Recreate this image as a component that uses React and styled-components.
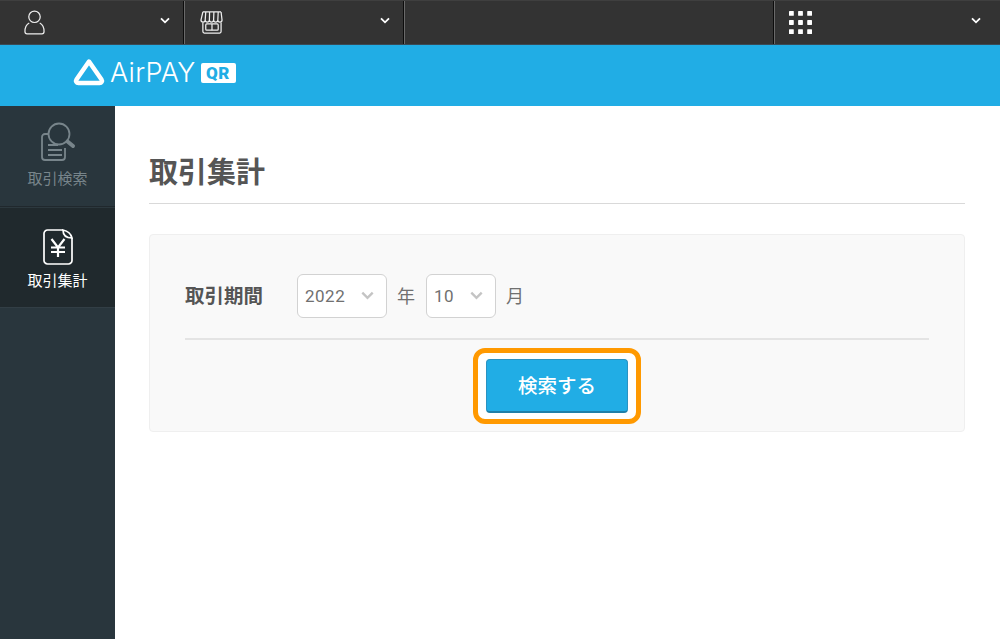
import React from 'react';
import styled, { createGlobalStyle } from 'styled-components';

const GlobalStyle = createGlobalStyle`
  html, body {
    margin: 0;
    padding: 0;
    background: #fff;
  }
  body {
    font-family: "Roboto", "Noto Sans CJK JP", sans-serif;
    color: #555;
  }
  * {
    box-sizing: border-box;
  }
`;

const Page = styled.div`
  width: 1000px;
  height: 639px;
  display: flex;
  flex-direction: column;
  overflow: hidden;
`;

const TopBar = styled.div`
  display: flex;
  height: 45px;
  flex: none;
  background: #333333;
  border-top: 1px solid #3f3f3f;
  border-bottom: 1px solid #3a4a55;
`;

const TopCell = styled.div`
  width: ${(props) => props.$width}px;
  flex: ${(props) => (props.$grow ? 1 : 'none')};
  display: flex;
  align-items: center;
  justify-content: space-between;
  padding: 0 ${(props) => props.$right}px 1px ${(props) => props.$left}px;
  border-right: ${(props) => (props.$last ? 'none' : '1px solid #0c0c0c')};
  box-shadow: ${(props) => (props.$last ? 'none' : '1px 0 0 #6a6a6a')};
`;

const TopChevron = styled.span`
  display: flex;
  margin-bottom: 3px;
`;

const Brand = styled.div`
  height: 61px;
  flex: none;
  display: flex;
  align-items: center;
  gap: 5px;
  padding: 0 0 6px 73px;
  background: #21ade5;
`;

const BrandName = styled.span`
  font-family: "Inter", "Liberation Sans", sans-serif;
  font-size: 27px;
  font-weight: 300;
  letter-spacing: 0.3px;
  line-height: 28px;
  color: #fff;
`;

const QrBadge = styled.span`
  width: 35px;
  height: 20px;
  border-radius: 2px;
  background: #fff;
  color: #21ade5;
  font-family: "Roboto", sans-serif;
  font-size: 17px;
  font-weight: 900;
  line-height: 20px;
  letter-spacing: 0.5px;
  text-align: center;
`;

const Body = styled.div`
  flex: 1;
  display: flex;
  min-height: 0;
`;

const Sidebar = styled.nav`
  width: 115px;
  flex: none;
  background: #29363d;
`;

const NavItem = styled.div`
  height: 101px;
  display: flex;
  flex-direction: column;
  align-items: center;
  padding-top: ${(props) => (props.$active ? 21 : 16)}px;
  gap: ${(props) => (props.$active ? 5 : 6)}px;
  background: ${(props) => (props.$active ? '#20292d' : '#29363d')};
  border-top: ${(props) => (props.$active ? '1px solid #2c383e' : 'none')};
  border-bottom: 1px solid ${(props) => (props.$active ? '#323e45' : '#20282d')};
  color: ${(props) => (props.$active ? '#fff' : '#78858b')};
  font-size: 15px;
  line-height: 20px;
  font-family: "Noto Sans CJK JP", sans-serif;
`;

const Main = styled.main`
  flex: 1;
  padding: 44px 35px 0 34px;
`;

const Title = styled.h1`
  margin: 0;
  height: 54px;
  font-family: "Noto Sans CJK JP", sans-serif;
  font-size: 29px;
  font-weight: 700;
  line-height: 40px;
  color: #555;
  border-bottom: 1px solid #d9d9d9;
`;

const Panel = styled.section`
  margin-top: 30px;
  height: 198px;
  padding: 0 35px;
  background: #f9f9f9;
  border: 1px solid #efefef;
  border-radius: 4px;
`;

const FilterRow = styled.div`
  height: 105px;
  display: flex;
  align-items: center;
  padding-top: 19px;
  border-bottom: 2px solid #e4e4e4;
  font-family: "Noto Sans CJK JP", sans-serif;
`;

const FieldLabel = styled.span`
  width: 112px;
  padding-bottom: 3px;
  font-size: 19.5px;
  font-weight: 700;
  color: #555;
`;

const SelectBox = styled.div`
  width: ${(props) => props.$width}px;
  height: 44px;
  display: flex;
  align-items: center;
  justify-content: space-between;
  padding: 0 12px 1px 7px;
  background: #fff;
  border: 1px solid #d2d2d2;
  border-radius: 6px;
  font-family: "Roboto", sans-serif;
  font-size: 17px;
  letter-spacing: 0.5px;
  color: #707070;
`;

const Unit = styled.span`
  width: ${(props) => props.$width}px;
  padding: 0 1px 2px 0;
  text-align: center;
  font-size: 18px;
  color: #707070;
`;

const ButtonRow = styled.div`
  display: flex;
  justify-content: center;
  padding-top: 8px;
`;

const Highlight = styled.div`
  padding: 6px 8px;
  background: #fff;
  border: 5px solid #ff9900;
  border-radius: 12px;
`;

const SearchButton = styled.button`
  display: block;
  width: 142px;
  height: 54px;
  padding: 0 0 3px;
  background: #21ade5;
  border: 1px solid #2a93c2;
  border-bottom: 2px solid #1f7fa8;
  border-radius: 4px;
  color: #fff;
  font-family: "Noto Sans CJK JP", sans-serif;
  font-size: 19.5px;
  font-weight: 500;
`;

const Chevron = ({ color = '#fff', size = 10 }) => (
  <svg width={size} height={size * 0.7} viewBox="0 0 10 7" fill="none">
    <path d="M1 1.3 5 5.3 9 1.3" stroke={color} strokeWidth="1.8" />
  </svg>
);

const UserIcon = () => (
  <svg width="21" height="25" viewBox="0 0 22 26" fill="none" stroke="#eee" strokeWidth="1.3">
    <circle cx="11" cy="7" r="6" />
    <path d="M5.5 13.5C2.5 15 1 18 1 22.5c0 1.5.7 2.5 2.2 2.5h15.6c1.5 0 2.2-1 2.2-2.5 0-4.500-1.500-7.500-4.500-9" />
  </svg>
);

const ShopIcon = () => (
  <svg width="23" height="23" viewBox="0 0 24 24" fill="none" stroke="#eee" strokeWidth="1.3">
    <path d="M3 1h19M1 9.500 3 1M22 1l1 8.500" />
    <path d="M1 9.500a2 2 0 0 0 4.400 0a2 2 0 0 0 4.400 0a2 2 0 0 0 4.400 0a2 2 0 0 0 4.400 0a2 2 0 0 0 4.400 0M6 1 5.400 9.500M10 1 9.800 9.500M14.500 1 14.200 9.500M19 1 18.600 9.500" />
    <path d="M3 12v9.500a1.500 1.500 0 0 0 1.500 1.500h16a1.500 1.500 0 0 0 1.500-1.500V12" />
    <rect x="6" y="13.500" width="13" height="6.500" rx="1" />
    <path d="M12.500 13.500v6.500" />
  </svg>
);

const GridIcon = () => (
  <svg width="23" height="23" viewBox="0 0 24 24" fill="#fff">
    {[0, 9.500, 19].map((y) =>
      [0, 9.500, 19].map((x) => <rect key={`${x}-${y}`} x={x} y={y} width="5" height="5" rx="0.6" />)
    )}
  </svg>
);

const LogoMark = () => (
  <svg width="32" height="29" viewBox="0 0 32 29" fill="none">
    <path
      d="M16 3.500 28.500 21.500a2.300 2.300 0 0 1-1.900 3.600H5.400a2.300 2.300 0 0 1-1.900-3.600Z"
      stroke="#fff"
      strokeWidth="4.500"
      strokeLinejoin="round"
    />
  </svg>
);

const SearchDocIcon = () => (
  <svg width="36" height="40" viewBox="0 0 36 40" fill="none" stroke="#78858b" strokeWidth="1.8">
    <path d="M9 12H5a3 3 0 0 0-3 3v20a3 3 0 0 0 3 3h17a3 3 0 0 0 3-3v-9" />
    <circle cx="19" cy="12" r="10.500" />
    <path d="M8 23h10M8 28h14M8 33h14" />
    <path d="M27.500 19.500 33 24" strokeWidth="4" strokeLinecap="round" />
  </svg>
);

const YenDocIcon = () => (
  <svg width="30" height="36" viewBox="0 0 30 36" fill="none" stroke="#fff" strokeWidth="1.700">
    <path d="M20 1H4.500A3.500 3.500 0 0 0 1 4.500v27A3.500 3.500 0 0 0 4.500 35h21a3.500 3.500 0 0 0 3.500-3.500V9" />
    <path d="M20 1c0 5 3 8 9 8-1-4-4-7-9-8Z" />
    <path d="M8.500 10 15 18.500 21.500 10M15 18.500V28M8 18.500h14M8 23h14" strokeWidth="2.200" />
  </svg>
);

function App() {
  return (
    <Page>
      <GlobalStyle />
      <TopBar>
        <TopCell $width={184} $left={24} $right={13}>
          <UserIcon />
          <TopChevron>
            <Chevron />
          </TopChevron>
        </TopCell>
        <TopCell $width={220} $left={16} $right={13}>
          <ShopIcon />
          <TopChevron>
            <Chevron />
          </TopChevron>
        </TopCell>
        <TopCell $width={370} $left={0} $right={0} />
        <TopCell $grow $last $left={15} $right={19}>
          <GridIcon />
          <TopChevron>
            <Chevron />
          </TopChevron>
        </TopCell>
      </TopBar>
      <Brand>
        <LogoMark />
        <BrandName>AirPAY</BrandName>
        <QrBadge>QR</QrBadge>
      </Brand>
      <Body>
        <Sidebar>
          <NavItem>
            <SearchDocIcon />
            <span>取引検索</span>
          </NavItem>
          <NavItem $active>
            <YenDocIcon />
            <span>取引集計</span>
          </NavItem>
        </Sidebar>
        <Main>
          <Title>取引集計</Title>
          <Panel>
            <FilterRow>
              <FieldLabel>取引期間</FieldLabel>
              <SelectBox $width={90}>
                2022
                <Chevron color="#c4c4c4" size={13} />
              </SelectBox>
              <Unit $width={39}>年</Unit>
              <SelectBox $width={70}>
                10
                <Chevron color="#c4c4c4" size={13} />
              </SelectBox>
              <Unit $width={39}>月</Unit>
            </FilterRow>
            <ButtonRow>
              <Highlight>
                <SearchButton>検索する</SearchButton>
              </Highlight>
            </ButtonRow>
          </Panel>
        </Main>
      </Body>
    </Page>
  );
}

export default App;
